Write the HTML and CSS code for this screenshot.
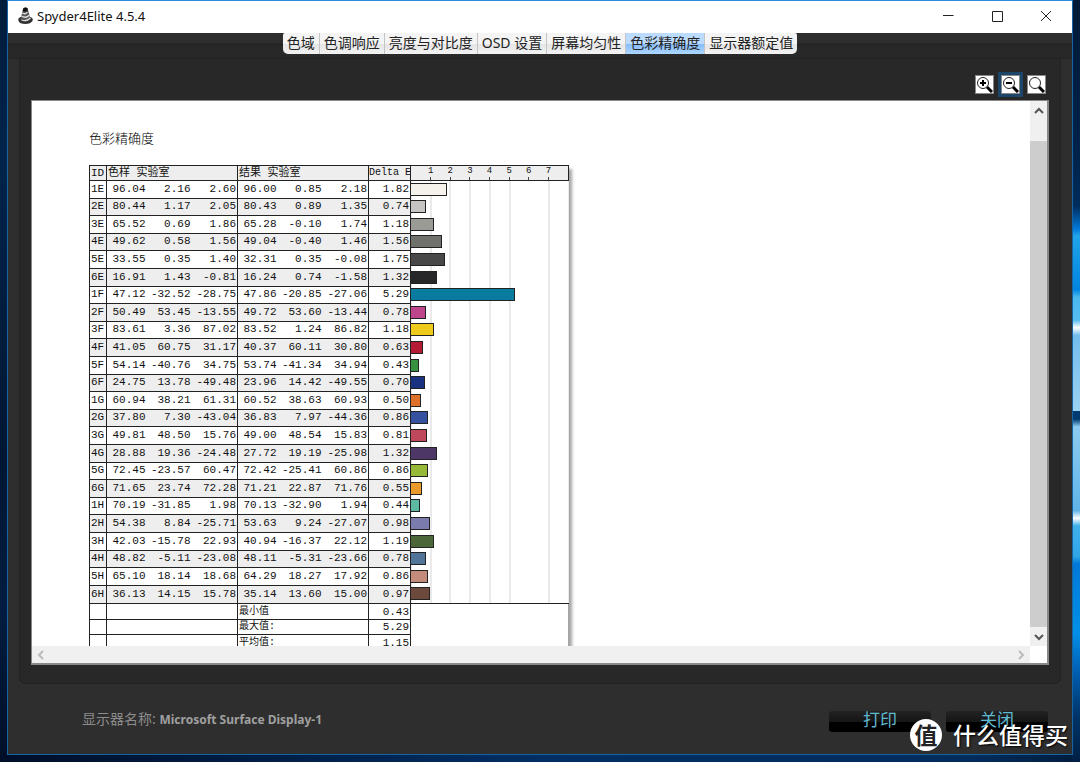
FILE: index.html
```
<!DOCTYPE html>
<html lang="zh-CN">
<head>
<meta charset="utf-8">
<meta name="viewport" content="width=device-width, initial-scale=1">
<title>Spyder4Elite 4.5.4</title>
<link rel="stylesheet" href="styles.css">
</head>
<body>
<div class="window">
  <header class="titlebar">
    <svg class="app-icon" viewBox="0 0 16 18" aria-hidden="true">
      <path d="M1 14 Q0 11 3 10 L13 10 Q16 11 15 14 Q13 17 8 17 Q2 17 1 14Z" fill="#333"/>
      <path d="M6 1 Q8 0 10 1 L13 12 Q8 16 3 12Z" fill="#555"/>
      <path d="M6 1 Q8 0 10 1 L10 4 Q8 5 5 4Z" fill="#111"/>
      <path d="M5 6 Q8 8 10 5 M4 9 Q8 12 12 8 M4 13 Q9 15 13 11" stroke="#ddd" stroke-width="1.3" fill="none"/>
    </svg>
    <h1 class="app-title">Spyder4Elite 4.5.4</h1>
    <div class="window-controls">
      <button class="window-btn" type="button" aria-label="最小化"><svg viewBox="0 0 12 12"><path d="M1 5.500H11.500"/></svg></button>
      <button class="window-btn" type="button" aria-label="最大化"><svg viewBox="0 0 12 12"><path d="M1.500 1.500H11.500V11.500H1.500Z"/></svg></button>
      <button class="window-btn" type="button" aria-label="关闭窗口"><svg viewBox="0 0 12 12"><path d="M1 1L11 11M11 1L1 11"/></svg></button>
    </div>
  </header>

  <nav class="tabstrip">
    <div class="tabs" role="tablist">
      <button class="tab" role="tab" type="button">色域</button>
      <button class="tab" role="tab" type="button">色调响应</button>
      <button class="tab" role="tab" type="button">亮度与对比度</button>
      <button class="tab" role="tab" type="button">OSD 设置</button>
      <button class="tab" role="tab" type="button">屏幕均匀性</button>
      <button class="tab tab-active" role="tab" type="button" aria-selected="true">色彩精确度</button>
      <button class="tab" role="tab" type="button">显示器额定值</button>
    </div>
  </nav>

  <main class="panel">
    <div class="toolbar">
      <button class="zoom-btn" type="button" aria-label="放大"><svg viewBox="0 0 17 17"><circle cx="7" cy="7" r="5.500"/><path class="sign" d="M4 7H10M7 4V10"/><path class="handle" d="M11 11L16 16"/></svg></button>
      <button class="zoom-btn zoom-focus" type="button" aria-label="缩小"><svg viewBox="0 0 17 17"><circle cx="7" cy="7" r="5.500"/><path class="sign" d="M4 7H10"/><path class="handle" d="M11 11L16 16"/></svg></button>
      <button class="zoom-btn" type="button" aria-label="实际大小"><svg viewBox="0 0 17 17"><circle cx="7" cy="7" r="5.500"/><path class="handle" d="M11 11L16 16"/></svg></button>
    </div>

    <section class="viewer">
      <div class="page">
        <h2 class="page-title">色彩精确度</h2>
        <div class="sheet">
          <table class="report">
            <colgroup><col class="c-id"><col class="c-l"><col class="c-a"><col class="c-b"><col class="c-l"><col class="c-a"><col class="c-b"><col class="c-delta"><col class="c-chart"></colgroup>
            <thead>
              <tr><th>ID</th><th colspan="3">色样 实验室</th><th colspan="3">结果 实验室</th><th class="delta-head">Delta E</th><th class="axis"><div class="ticks"><span>1</span><span>2</span><span>3</span><span>4</span><span>5</span><span>6</span><span>7</span></div></th></tr>
            </thead>
            <tbody class="samples">
              <tr><th>1E</th><td>96.04</td><td>2.16</td><td>2.60</td><td>96.00</td><td>0.85</td><td>2.18</td><td>1.82</td><td><div class="bar" style="--e:1.82;--c:#f5f2ec"></div></td></tr>
              <tr><th>2E</th><td>80.44</td><td>1.17</td><td>2.05</td><td>80.43</td><td>0.89</td><td>1.35</td><td>0.74</td><td><div class="bar" style="--e:0.74;--c:#c6c4c2"></div></td></tr>
              <tr><th>3E</th><td>65.52</td><td>0.69</td><td>1.86</td><td>65.28</td><td>-0.10</td><td>1.74</td><td>1.18</td><td><div class="bar" style="--e:1.18;--c:#9b9b96"></div></td></tr>
              <tr><th>4E</th><td>49.62</td><td>0.58</td><td>1.56</td><td>49.04</td><td>-0.40</td><td>1.46</td><td>1.56</td><td><div class="bar" style="--e:1.56;--c:#70716c"></div></td></tr>
              <tr><th>5E</th><td>33.55</td><td>0.35</td><td>1.40</td><td>32.31</td><td>0.35</td><td>-0.08</td><td>1.75</td><td><div class="bar" style="--e:1.75;--c:#484848"></div></td></tr>
              <tr><th>6E</th><td>16.91</td><td>1.43</td><td>-0.81</td><td>16.24</td><td>0.74</td><td>-1.58</td><td>1.32</td><td><div class="bar" style="--e:1.32;--c:#27272a"></div></td></tr>
              <tr><th>1F</th><td>47.12</td><td>-32.52</td><td>-28.75</td><td>47.86</td><td>-20.85</td><td>-27.06</td><td>5.29</td><td><div class="bar" style="--e:5.29;--c:#087b9e"></div></td></tr>
              <tr><th>2F</th><td>50.49</td><td>53.45</td><td>-13.55</td><td>49.72</td><td>53.60</td><td>-13.44</td><td>0.78</td><td><div class="bar" style="--e:0.78;--c:#be458c"></div></td></tr>
              <tr><th>3F</th><td>83.61</td><td>3.36</td><td>87.02</td><td>83.52</td><td>1.24</td><td>86.82</td><td>1.18</td><td><div class="bar" style="--e:1.18;--c:#eeca1b"></div></td></tr>
              <tr><th>4F</th><td>41.05</td><td>60.75</td><td>31.17</td><td>40.37</td><td>60.11</td><td>30.80</td><td>0.63</td><td><div class="bar" style="--e:0.63;--c:#b51b34"></div></td></tr>
              <tr><th>5F</th><td>54.14</td><td>-40.76</td><td>34.75</td><td>53.74</td><td>-41.34</td><td>34.94</td><td>0.43</td><td><div class="bar" style="--e:0.43;--c:#37933f"></div></td></tr>
              <tr><th>6F</th><td>24.75</td><td>13.78</td><td>-49.48</td><td>23.96</td><td>14.42</td><td>-49.55</td><td>0.70</td><td><div class="bar" style="--e:0.70;--c:#1a3180"></div></td></tr>
              <tr><th>1G</th><td>60.94</td><td>38.21</td><td>61.31</td><td>60.52</td><td>38.63</td><td>60.93</td><td>0.50</td><td><div class="bar" style="--e:0.50;--c:#df7029"></div></td></tr>
              <tr><th>2G</th><td>37.80</td><td>7.30</td><td>-43.04</td><td>36.83</td><td>7.97</td><td>-44.36</td><td>0.86</td><td><div class="bar" style="--e:0.86;--c:#36529e"></div></td></tr>
              <tr><th>3G</th><td>49.81</td><td>48.50</td><td>15.76</td><td>49.00</td><td>48.54</td><td>15.83</td><td>0.81</td><td><div class="bar" style="--e:0.81;--c:#bf485c"></div></td></tr>
              <tr><th>4G</th><td>28.88</td><td>19.36</td><td>-24.48</td><td>27.72</td><td>19.19</td><td>-25.98</td><td>1.32</td><td><div class="bar" style="--e:1.32;--c:#4d3767"></div></td></tr>
              <tr><th>5G</th><td>72.45</td><td>-23.57</td><td>60.47</td><td>72.42</td><td>-25.41</td><td>60.86</td><td>0.86</td><td><div class="bar" style="--e:0.86;--c:#97b93a"></div></td></tr>
              <tr><th>6G</th><td>71.65</td><td>23.74</td><td>72.28</td><td>71.21</td><td>22.87</td><td>71.76</td><td>0.55</td><td><div class="bar" style="--e:0.55;--c:#e99a2b"></div></td></tr>
              <tr><th>1H</th><td>70.19</td><td>-31.85</td><td>1.98</td><td>70.13</td><td>-32.90</td><td>1.94</td><td>0.44</td><td><div class="bar" style="--e:0.44;--c:#5cb9a2"></div></td></tr>
              <tr><th>2H</th><td>54.38</td><td>8.84</td><td>-25.71</td><td>53.63</td><td>9.24</td><td>-27.07</td><td>0.98</td><td><div class="bar" style="--e:0.98;--c:#7c7bae"></div></td></tr>
              <tr><th>3H</th><td>42.03</td><td>-15.78</td><td>22.93</td><td>40.94</td><td>-16.37</td><td>22.12</td><td>1.19</td><td><div class="bar" style="--e:1.19;--c:#4b673a"></div></td></tr>
              <tr><th>4H</th><td>48.82</td><td>-5.11</td><td>-23.08</td><td>48.11</td><td>-5.31</td><td>-23.66</td><td>0.78</td><td><div class="bar" style="--e:0.78;--c:#507598"></div></td></tr>
              <tr><th>5H</th><td>65.10</td><td>18.14</td><td>18.68</td><td>64.29</td><td>18.27</td><td>17.92</td><td>0.86</td><td><div class="bar" style="--e:0.86;--c:#c28b7b"></div></td></tr>
              <tr><th>6H</th><td>36.13</td><td>14.15</td><td>15.78</td><td>35.14</td><td>13.60</td><td>15.00</td><td>0.97</td><td><div class="bar" style="--e:0.97;--c:#6c493d"></div></td></tr>
            </tbody>
            <tbody class="summary">
              <tr><td></td><td colspan="3"></td><th colspan="3">最小值</th><td>0.43</td><td></td></tr>
              <tr><td></td><td colspan="3"></td><th colspan="3">最大值:</th><td>5.29</td><td></td></tr>
              <tr><td></td><td colspan="3"></td><th colspan="3">平均值:</th><td>1.15</td><td></td></tr>
            </tbody>
          </table>
        </div>
      </div>
      <div class="vscroll">
        <svg class="arrow" viewBox="0 0 10 8"><path d="M1 6L5 2L9 6"/></svg>
        <div class="thumb"></div>
        <svg class="arrow" viewBox="0 0 10 8"><path d="M1 2L5 6L9 2"/></svg>
      </div>
      <div class="hscroll">
        <svg class="arrow" viewBox="0 0 8 10"><path d="M6 1L2 5L6 9"/></svg>
        <svg class="arrow" viewBox="0 0 8 10"><path d="M2 1L6 5L2 9"/></svg>
      </div>
    </section>
  </main>

  <footer class="footer">
    <p class="display-name">显示器名称: <strong>Microsoft Surface Display-1</strong></p>
    <div class="actions">
      <button class="action" type="button">打印</button>
      <button class="action" type="button">关闭</button>
    </div>
  </footer>
</div>
<div class="watermark"><span class="badge">值</span><span>什么值得买</span></div>
</body>
</html>
```
FILE: styles.css
```
* { box-sizing: border-box; }

body {
  margin: 0;
  min-height: 100vh;
  display: flex;
  padding: 0 7px 7px;
  position: relative;
  overflow: hidden;
  font-family: "Noto Sans", "Noto Sans CJK SC", sans-serif;
  background:
    linear-gradient(180deg, #001a38 0, #00234a 20%, #002c5c 27%, #0078d8 30%, #22a4ea 31%, #0084e0 38%, #4ab8ee 39%, #55bdf0 42%, #fff 43%, #72bdec 44%, #9ad2f2 54%, #003a70 54%, #003a70 55%, #8ccbf0 56%, #60b4e8 67%, #fff 68%, #40b0ea 69%, #30a6e8 73%, #0078d8 74%, #0090e8 83%, #0060b4 88%, #003468 94%, #001f44 100%) right / 8px 100% no-repeat,
    linear-gradient(90deg, #000e28, #002e62 50%, #002c5c 90%, #001c3c) bottom / 100% 8px no-repeat,
    linear-gradient(180deg, #001c3c, #00244a 20%, #001634 60%, #001c40 80%, #000f28);
}

button { margin: 0; padding: 0; border: 0; font: inherit; cursor: pointer; }

.window {
  flex: 1;
  min-width: 0;
  height: calc(100vh - 7px);
  display: flex;
  flex-direction: column;
  border: 1px solid #1565a5;
  border-top-color: #2c8ade;
  background: #2e2e2e;
}

/* Title bar */
.titlebar {
  flex: none;
  height: 32px;
  display: flex;
  align-items: center;
  padding: 0 2px 2px 9px;
  background: #fff;
}
.app-icon { width: 17px; height: 18px; }
.app-title { flex: 1; margin: 0 0 0 3px; font-size: 13px; font-weight: 400; color: #111; }
.window-controls { display: flex; }
.window-btn {
  width: 49px;
  height: 30px;
  display: grid;
  place-items: center;
  background: none;
}
.window-btn svg { width: 12px; height: 12px; fill: none; stroke: #222; stroke-width: 1; }

/* Tabs */
.tabstrip {
  flex: none;
  height: 26px;
  display: flex;
  justify-content: center;
  align-items: flex-start;
  background: linear-gradient(#2e2e2e 10px, #222 11px, #282828 13px, #282828 24px, #222 26px);
}
.tabs {
  display: flex;
  overflow: hidden;
  border-radius: 2px 2px 5px 5px;
}
.tab {
  height: 21px;
  padding: 0 4px 1px;
  border-right: 1px solid #c4c4c4;
  background: linear-gradient(#f4f4f4 50%, #e4e4e4 50%, #f2f2f2);
  font-size: 14px;
  line-height: 18px;
  color: #222;
  white-space: nowrap;
}
.tab:last-child { border-right: 0; }
.tab-active { background: linear-gradient(#bcdcff 50%, #84bcfa 50%, #acd6ff); }

/* Report panel */
.panel {
  flex: 1;
  min-height: 0;
  display: flex;
  flex-direction: column;
  margin: 0 11px;
  padding: 13px 11px 18px;
  border: 1px solid #222;
  border-top: 0;
  border-radius: 0 0 7px 7px;
  background: #282828;
}
.toolbar {
  flex: none;
  height: 28px;
  display: flex;
  justify-content: flex-end;
  align-items: flex-start;
  gap: 1px;
}
.zoom-btn {
  width: 25px;
  height: 25px;
  padding: 3px;
  background: none;
}
.zoom-focus { background: #1c4669; }
.zoom-btn svg {
  display: block;
  width: 19px;
  height: 19px;
  border: 1px solid #888;
  background: #fff;
  fill: none;
  stroke: #222;
}
.zoom-btn .sign { stroke: #000; stroke-width: 2; }
.zoom-btn .handle { stroke: #000; stroke-width: 3; }

.viewer {
  flex: 1;
  min-height: 0;
  display: grid;
  grid-template: minmax(0, 1fr) 17px / minmax(0, 1fr) 17px;
  border: 1px solid #888;
  border-width: 1px 2px 2px 1px;
  background: #fff;
}
.page { overflow: hidden; padding: 27px 57px 0; }
.page-title {
  margin: 0 0 17px;
  font-size: 13px;
  line-height: 20px;
  font-weight: 300;
  color: #000;
}
.sheet {
  width: 479px;
  min-height: 640px;
  box-shadow: 4px 4px 3px #a4a4a4;
  background: #fff;
}

/* Measurement table */
.report {
  width: 100%;
  table-layout: fixed;
  border-collapse: collapse;
  font-family: "Liberation Mono", "Noto Sans CJK SC", monospace;
  font-size: 11px;
  line-height: 12px;
  color: #111;
}
.c-id { width: 17px; }
.c-l { width: 40px; }
.c-a { width: 45px; }
.c-b { width: 46px; }
.c-delta { width: 42px; }
.c-chart { width: 158px; }
.report th, .report td {
  padding: 0 1px;
  border: 1px solid #222;
  font-weight: 400;
  white-space: nowrap;
}
.report th { text-align: left; }
.report td { text-align: right; }
.report thead tr { height: 15px; background: #eee; }
.report .delta-head { padding: 0; font-size: 10px; text-align: center; }
.report .axis { padding: 0; }
.ticks { display: flex; padding: 0 6.25%; height: 14px; font-size: 9px; line-height: 10px; }
.ticks span {
  flex: 1;
  text-align: center;
  background: linear-gradient(#444, #444) bottom / 1px 3px no-repeat;
}
.samples tr { height: 18px; }
.samples tr:nth-child(5n+2), .samples tr:nth-child(5n+4) { height: 17px; }
.samples tr:last-child { height: 18px; }
.samples tr:nth-child(even) { background: #eee; }
.samples th, .samples td { padding-bottom: 2px; }
.samples td:nth-child(2), .samples td:nth-child(3),
.samples td:nth-child(5), .samples td:nth-child(6) { border-right-width: 0; }
.samples td:nth-child(3), .samples td:nth-child(4),
.samples td:nth-child(6), .samples td:nth-child(7) { border-left-width: 0; }
.samples td:last-child {
  padding: 0 0 1px;
  border-width: 0 0 0 1px;
  background: repeating-linear-gradient(90deg, #fff 0 calc(12.5% - 1px), #d4d4d4 calc(12.5% - 1px) 12.5%);
}
.samples tr:last-child td:last-child { border-bottom-width: 1px; }
.bar {
  width: calc(var(--e) * 12.5%);
  height: 13px;
  border: 1px solid #222;
  border-left: 0;
  background: var(--c);
}
.summary tr { height: 16px; }
.summary tr:nth-child(2) { height: 15px; }
.summary td:last-child { border-width: 1px 0 0 1px; }
.summary tr + tr td:last-child { border-top-width: 0; }
.summary th { font-size: 10px; }

/* Scroll bars */
.arrow { flex: none; width: 10px; height: 10px; fill: none; stroke: #555; stroke-width: 2; }
.vscroll {
  display: flex;
  flex-direction: column;
  align-items: center;
  padding: 5px 0 4px;
  background: #f0f0f0;
}
.thumb { flex: 1; width: 100%; margin: 25px 0 5px; background: #cdcdcd; }
.hscroll {
  display: flex;
  justify-content: space-between;
  align-items: center;
  padding: 0 4px;
  background: #f0f0f0;
}
.hscroll .arrow { stroke: #bbb; }

/* Footer */
.footer {
  flex: none;
  height: 70px;
  display: flex;
  justify-content: space-between;
  align-items: center;
  padding: 0 24px 0 74px;
}
.display-name { margin: 0; padding-bottom: 3px; font-size: 14px; color: #8c8c8c; }
.display-name strong { font-size: 12px; font-weight: 700; color: #a0a0a0; }
.actions { display: flex; gap: 15px; padding-top: 4px; }
.action {
  width: 102px;
  height: 21px;
  padding-bottom: 3px;
  border-radius: 3px;
  background: linear-gradient(#222, #161616 50%, #000 50%);
  font-size: 17px;
  line-height: 17px;
  color: #5fb8cf;
}

/* Watermark */
.watermark {
  position: absolute;
  right: 12px;
  bottom: 11px;
  display: flex;
  align-items: center;
  gap: 11px;
  font-size: 23px;
  line-height: 32px;
  font-weight: 500;
  color: #fff;
  text-shadow: 1px 1px 2px #000;
}
.badge {
  width: 32px;
  height: 32px;
  border-radius: 50%;
  background: #fff;
  color: #222;
  font-weight: 700;
  text-align: center;
  text-shadow: none;
}
```
